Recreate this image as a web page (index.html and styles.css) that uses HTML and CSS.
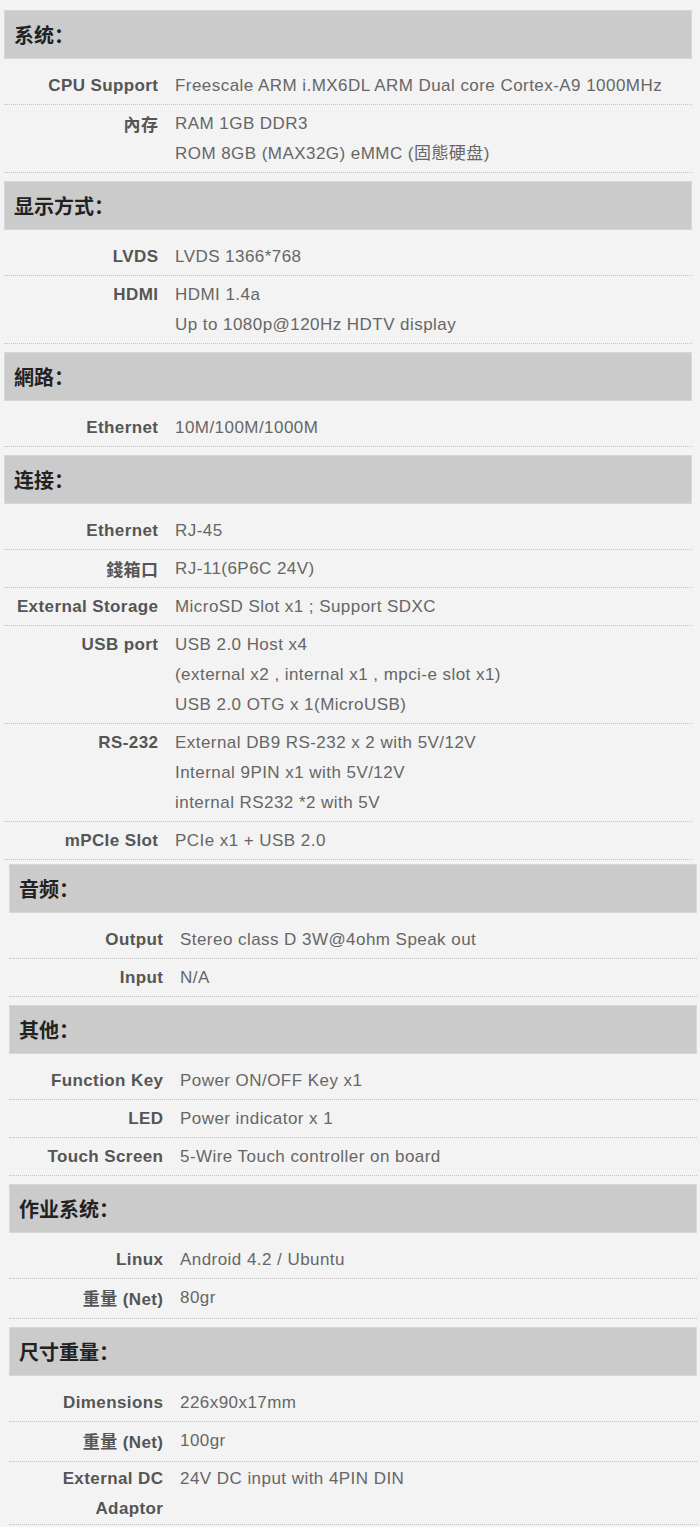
FILE: index.html
```html
<!DOCTYPE html>
<html lang="zh">
<head>
<meta charset="utf-8">
<title>Specifications</title>
<link rel="stylesheet" href="styles.css">
</head>
<body>
<div class="sheet sheet-a">
  <section class="group">
    <h2 class="group-title">系统：</h2>
    <div class="row"><div class="label">CPU Support</div><div class="value">Freescale ARM i.MX6DL ARM Dual core Cortex-A9 1000MHz</div></div>
    <div class="row"><div class="label cjk">內存</div><div class="value">RAM 1GB DDR3<br>ROM 8GB (MAX32G) eMMC (固態硬盘)</div></div>
  </section>
  <section class="group">
    <h2 class="group-title">显示方式：</h2>
    <div class="row"><div class="label">LVDS</div><div class="value">LVDS 1366*768</div></div>
    <div class="row"><div class="label">HDMI</div><div class="value">HDMI 1.4a<br>Up to 1080p@120Hz HDTV display</div></div>
  </section>
  <section class="group">
    <h2 class="group-title">網路：</h2>
    <div class="row"><div class="label">Ethernet</div><div class="value">10M/100M/1000M</div></div>
  </section>
  <section class="group">
    <h2 class="group-title">连接：</h2>
    <div class="row"><div class="label">Ethernet</div><div class="value">RJ-45</div></div>
    <div class="row"><div class="label cjk">錢箱口</div><div class="value">RJ-11(6P6C 24V)</div></div>
    <div class="row"><div class="label">External Storage</div><div class="value">MicroSD Slot x1 ; Support SDXC</div></div>
    <div class="row"><div class="label">USB port</div><div class="value">USB 2.0 Host x4<br>(external x2 , internal x1 , mpci-e slot x1)<br>USB 2.0 OTG x 1(MicroUSB)</div></div>
    <div class="row"><div class="label">RS-232</div><div class="value">External DB9 RS-232 x 2 with 5V/12V<br>Internal 9PIN x1 with 5V/12V<br>internal RS232 *2 with 5V</div></div>
    <div class="row"><div class="label">mPCIe Slot</div><div class="value">PCIe x1 + USB 2.0</div></div>
  </section>
</div>
<div class="sheet sheet-b">
  <section class="group">
    <h2 class="group-title">音频：</h2>
    <div class="row"><div class="label">Output</div><div class="value">Stereo class D 3W@4ohm Speak out</div></div>
    <div class="row"><div class="label">Input</div><div class="value">N/A</div></div>
  </section>
  <section class="group">
    <h2 class="group-title">其他：</h2>
    <div class="row"><div class="label">Function Key</div><div class="value">Power ON/OFF Key x1</div></div>
    <div class="row"><div class="label">LED</div><div class="value">Power indicator x 1</div></div>
    <div class="row"><div class="label">Touch Screen</div><div class="value">5-Wire Touch controller on board</div></div>
  </section>
  <section class="group">
    <h2 class="group-title">作业系统：</h2>
    <div class="row"><div class="label">Linux</div><div class="value">Android 4.2 / Ubuntu</div></div>
    <div class="row"><div class="label"><span class="cjk">重量</span> (Net)</div><div class="value">80gr</div></div>
  </section>
  <section class="group">
    <h2 class="group-title">尺寸重量：</h2>
    <div class="row"><div class="label">Dimensions</div><div class="value">226x90x17mm</div></div>
    <div class="row"><div class="label"><span class="cjk">重量</span> (Net)</div><div class="value">100gr</div></div>
    <div class="row row-tight"><div class="label">External DC<br>Adaptor</div><div class="value">24V DC input with 4PIN DIN</div></div>
  </section>
</div>
</body>
</html>
```
FILE: styles.css
```css
html, body {
  margin: 0;
  padding: 0;
  background: #f3f3f3;
}

body {
  font-family: "Liberation Sans", Arial, "Noto Sans CJK TC", "Noto Sans CJK SC", sans-serif;
  font-size: 17px;
  color: #666;
}

.sheet {
  width: 688px;
}

.sheet-a {
  margin-left: 4px;
  padding-top: 2px;
}

.sheet-b {
  margin-left: 9px;
  margin-top: -4px;
}

.group-title {
  margin: 8px 0;
  height: 47px;
  line-height: 47px;
  padding: 0 0 0 9px;
  background: #cbcbcb;
  border: 1px solid #d7d7d7;
  font-family: "Noto Sans CJK TC", "Noto Sans CJK SC", sans-serif;
  font-size: 20px;
  font-weight: 700;
  color: #222;
}

.row {
  display: grid;
  grid-template-columns: 154px 1fr;
  column-gap: 17px;
  padding: 4px 0 3px;
  line-height: 30px;
  border-bottom: 1px dotted #c4c4c4;
}

.row-tight {
  padding: 2px 0 0;
}

.label {
  text-align: right;
  font-weight: 700;
  color: #555;
  letter-spacing: 0.4px;
  margin-right: -0.4px;
}

.cjk {
  font-family: "Noto Sans CJK TC", "Noto Sans CJK SC", sans-serif;
  font-weight: 700;
}

.value {
  color: #666;
  letter-spacing: 0.45px;
}
```
